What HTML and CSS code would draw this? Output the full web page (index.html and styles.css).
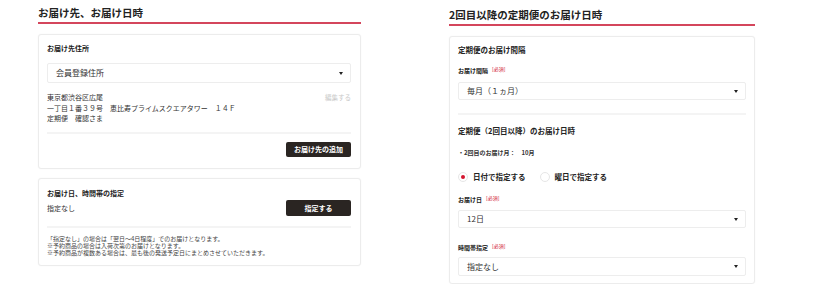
FILE: index.html
```html
<!DOCTYPE html>
<html lang="ja">
<head>
<meta charset="utf-8">
<title>お届け先、お届け日時</title>
<link rel="stylesheet" href="styles.css">
</head>
<body>
<div class="page">
  <section class="col col-left">
    <h2 class="heading">お届け先、お届け日時</h2>

    <div class="card card-address">
      <div class="card-title">お届け先住所</div>
      <div class="select select-lg"><span>会員登録住所</span><i class="arrow"></i></div>
      <div class="address">
        <div class="address-lines">
          <div>東京都渋谷区広尾</div>
          <div>一丁目１番３９号　恵比寿プライムスクエアタワー　１４Ｆ</div>
          <div>定期便　確認さま</div>
        </div>
        <span class="edit">編集する</span>
      </div>
      <div class="divider"></div>
      <div class="actions"><button class="btn btn-add">お届け先の追加</button></div>
    </div>

    <div class="card card-date">
      <div class="card-title">お届け日、時間帯の指定</div>
      <div class="date-row">
        <span class="date-value">指定なし</span>
        <button class="btn btn-set">指定する</button>
      </div>
      <div class="divider divider-date"></div>
      <div class="notes">
        <div>「指定なし」の場合は「翌日〜4日程度」でのお届けとなります。</div>
        <div>※予約商品の場合は入荷次第のお届けとなります。</div>
        <div>※予約商品が複数ある場合は、最も後の発送予定日にまとめさせていただきます。</div>
      </div>
    </div>
  </section>

  <section class="col col-right">
    <h2 class="heading">2回目以降の定期便のお届け日時</h2>

    <div class="card card-sub">
      <div class="card-title title-lg">定期便のお届け間隔</div>
      <div class="label label-interval">お届け間隔<span class="req">[必須]</span></div>
      <div class="select select-sm sel-interval"><span>毎月（１ヵ月）</span><i class="arrow"></i></div>
      <div class="divider divider-sub"></div>
      <div class="card-title title-lg title-second">定期便（2回目以降）のお届け日時</div>
      <div class="month">・2回目のお届け月：　10月</div>
      <div class="radios">
        <label class="radio"><span class="circle checked"></span>日付で指定する</label>
        <label class="radio"><span class="circle"></span>曜日で指定する</label>
      </div>
      <div class="label label-day">お届け日<span class="req">[必須]</span></div>
      <div class="select select-sm sel-day"><span>12日</span><i class="arrow"></i></div>
      <div class="label label-time">時間帯指定<span class="req">[必須]</span></div>
      <div class="select select-sm sel-time"><span>指定なし</span><i class="arrow"></i></div>
    </div>
  </section>
</div>
</body>
</html>
```
FILE: styles.css
```css
* { box-sizing: border-box; }
body {
  margin: 0;
  background: #fff;
  color: #333;
  font-family: "Noto Sans CJK JP", "Noto Sans", sans-serif;
}
.page {
  display: flex;
  gap: 88px;
  padding-left: 38px;
}
.col-left { width: 323px; }
.col-right { width: 306px; margin-top: 2px; }

.heading {
  margin: 0;
  padding: 6px 0 2px;
  font-size: 10.5px;
  line-height: 14px;
  font-weight: 700;
  color: #222;
  border-bottom: 2px solid #d4465c;
}

.card {
  margin-top: 10px;
  border: 1px solid #ececec;
  border-radius: 3px;
  box-shadow: 0 0 2px rgba(0, 0, 0, 0.04);
  background: #fff;
  padding: 8px 9px 11px 8px;
}
.card-title {
  font-size: 7px;
  line-height: 10px;
  height: 10px;
  font-weight: 700;
  color: #222;
}
.title-lg { font-size: 7.5px; }

.select {
  display: flex;
  align-items: center;
  justify-content: space-between;
  border: 1px solid #ededed;
  border-radius: 2px;
  background: #fff;
  font-size: 8px;
  line-height: 10px;
  color: #333;
  padding: 0 7px 0 8px;
}
.select-lg { height: 20px; margin-top: 10px; }
.select-sm { height: 18px; }
.arrow {
  width: 0;
  height: 0;
  border-left: 2px solid transparent;
  border-right: 2px solid transparent;
  border-top: 3px solid #222;
}

.address {
  display: flex;
  justify-content: space-between;
  margin-top: 9px;
  font-size: 7px;
  line-height: 10.5px;
}
.edit { color: #c9c9c9; font-size: 6.5px; }

.divider { height: 2px; background: #f4f4f4; margin-top: 8px; }

.actions { display: flex; justify-content: flex-end; margin-top: 8px; }
.btn {
  width: 65px;
  border: none;
  border-radius: 2px;
  background: #2a2522;
  color: #fff;
  font-family: inherit;
  font-size: 7px;
  line-height: 10px;
  font-weight: 700;
  padding: 0;
}
.btn-add { height: 15px; }

.card-date { margin-top: 9px; padding-top: 9px; padding-bottom: 8px; }
.date-row {
  display: flex;
  justify-content: space-between;
  align-items: center;
  margin-top: 2px;
  height: 16px;
  font-size: 7px;
}
.btn-set { height: 16px; }
.divider-date { margin-top: 10px; }
.notes {
  margin-top: 7px;
  font-size: 6px;
  line-height: 7.4px;
  color: #444;
}

.card-sub { padding: 8px 8px 7px 8px; }
.label {
  font-size: 6px;
  line-height: 10px;
  height: 10px;
  font-weight: 700;
  color: #222;
}
.req {
  color: #d0112b;
  font-size: 5px;
  line-height: 0;
  font-weight: 400;
  margin-left: 4px;
  position: relative;
  top: -2px;
}
.label-interval { margin-top: 11px; }
.sel-interval { margin-top: 6px; }
.divider-sub { margin-top: 13px; }
.title-second { margin-top: 11px; }
.month {
  margin-top: 12px;
  font-size: 6px;
  line-height: 10px;
  height: 10px;
  font-weight: 700;
}
.radios {
  display: flex;
  gap: 14px;
  margin-top: 13px;
  height: 12px;
  align-items: center;
}
.radio {
  display: flex;
  align-items: center;
  gap: 5px;
  font-size: 7.5px;
  line-height: 10px;
  font-weight: 700;
  color: #222;
}
.circle {
  width: 10px;
  height: 10px;
  border-radius: 50%;
  border: 1px solid #e6e6e6;
  display: flex;
  align-items: center;
  justify-content: center;
}
.circle.checked::after {
  content: "";
  width: 4px;
  height: 4px;
  border-radius: 50%;
  background: #d4152f;
}
.label-day { margin-top: 12px; }
.sel-day { margin-top: 5px; }
.label-time { margin-top: 15px; }
.sel-time { margin-top: 4px; height: 19px; }
```
